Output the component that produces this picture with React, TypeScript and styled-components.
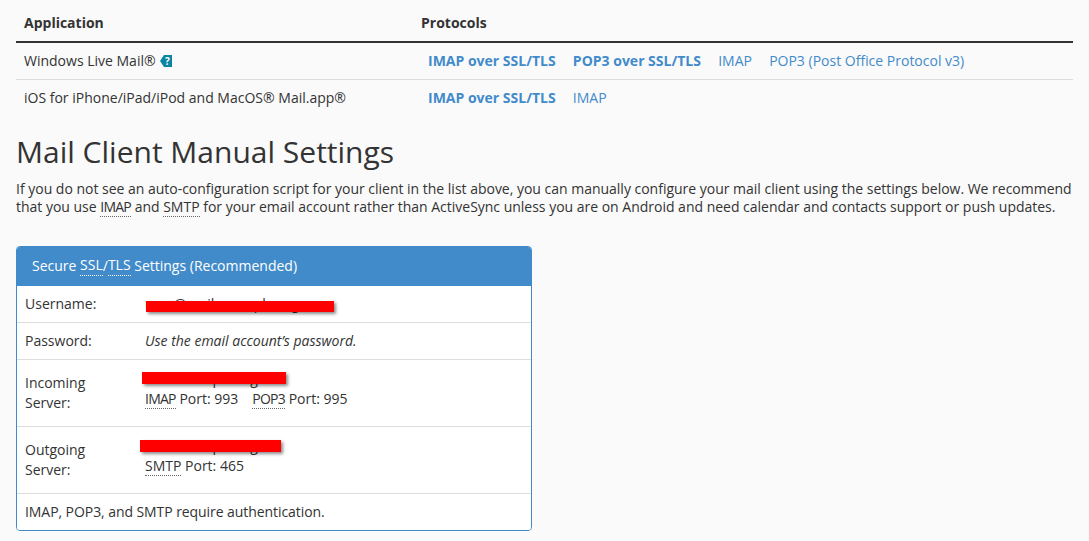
import React from "react";
import styled, { createGlobalStyle } from "styled-components";

const Global = createGlobalStyle`
  html, body { margin: 0; padding: 0; background: #fafafa; }
  body { font-family: "Open Sans", "Liberation Sans", sans-serif; font-size: 14px; line-height: 20px; color: #333; }
`;
const Page = styled.div`
  padding: 0 16px;
  height: 541px;
  overflow: hidden;
  box-sizing: border-box;
`;
const Table = styled.div`
  display: grid;
  grid-template-columns: 397px 1fr;
`;
const HeadCell = styled.div`
  font-weight: 700;
  padding: 13px 8px 8px;
  box-sizing: border-box;
  border-bottom: 2px solid #333;
  height: 43px;
`;
const Cell = styled.div<{ $last?: boolean }>`
  padding: 8px;
  height: 37px;
  box-sizing: border-box;
  display: flex;
  align-items: center;
  border-bottom: 1px solid ${(p) => (p.$last ? "transparent" : "#ddd")};
`;
const Links = styled(Cell)`
  padding-left: 15px;
  gap: 17.2px;
`;
const ProtoLink = styled.a<{ $strong?: boolean }>`
  color: #428bca;
  font-weight: ${(p) => (p.$strong ? 700 : 400)};
  text-decoration: none;
`;
const Help = styled.svg`
  margin-left: 4px;
  flex: none;
`;
const Title = styled.h2`
  font-size: 30px;
  font-weight: 400;
  line-height: 33px;
  margin: 18px 0 12px;
`;
const Intro = styled.p`
  margin: 0 -8px 30px 0;
  line-height: 18px;
  letter-spacing: -0.012px;
`;
const Abbr = styled.span<{ $tight?: boolean }>`
  border-bottom: 1px dotted #666;
  letter-spacing: ${(p) => (p.$tight ? "-0.75px" : "0")};
`;
const Panel = styled.div`
  width: 516px;
  box-sizing: border-box;
  border: 1px solid #428bca;
  border-radius: 4px;
  overflow: hidden;
`;
const PanelHead = styled.div`
  background: #428bca;
  color: #fff;
  height: 39px;
  padding: 0 15px 2px;
  box-sizing: border-box;
  display: flex;
  align-items: center;
  white-space: pre;
`;
const WhiteAbbr = styled(Abbr)`
  border-bottom-color: #fff;
`;
const Row = styled.div<{ $h: number }>`
  position: relative;
  display: grid;
  grid-template-columns: 120px 1fr;
  align-items: center;
  height: ${(p) => p.$h}px;
  padding: 0 8px;
  box-sizing: border-box;
  background: #fff;
  border-bottom: 1px solid #ddd;
`;
const Foot = styled.div`
  background: #fff;
  height: 36px;
  padding: 8px;
  box-sizing: border-box;
  letter-spacing: -0.07px;
`;
const Label = styled.div``;
const Value = styled.div<{ $italic?: boolean }>`
  font-style: ${(p) => (p.$italic ? "italic" : "normal")};
`;
const ServerValue = styled.div`
  padding-bottom: 9px;
`;
const Ports = styled.div`
  display: flex;
  gap: 14px;
  white-space: pre;
`;
const Redact = styled.div<{ $l: number; $t: number; $w: number; $h: number }>`
  position: absolute;
  left: ${(p) => p.$l}px;
  top: ${(p) => p.$t}px;
  width: ${(p) => p.$w}px;
  height: ${(p) => p.$h}px;
  background: #ff0000;
  box-shadow: 2px 2px 3px rgba(0, 0, 0, 0.45);
`;

export default function App() {
  return (
    <Page>
      <Global />
      <Table>
        <HeadCell>Application</HeadCell>
        <HeadCell>Protocols</HeadCell>
        <Cell>
          Windows Live Mail®
          <Help width="12" height="12" viewBox="0 0 12 12">
            <path d="M4 0H12V12H4L0 6Z" fill="#0a85a0" />
            <text x="7.5" y="10" fontSize="10" fontWeight="700" fill="#fff" textAnchor="middle" fontFamily="Open Sans">?</text>
          </Help>
        </Cell>
        <Links>
          <ProtoLink $strong>IMAP over SSL/TLS</ProtoLink>
          <ProtoLink $strong>POP3 over SSL/TLS</ProtoLink>
          <ProtoLink>IMAP</ProtoLink>
          <ProtoLink>POP3 (Post Office Protocol v3)</ProtoLink>
        </Links>
        <Cell $last>iOS for iPhone/iPad/iPod and MacOS® Mail.app®</Cell>
        <Links $last>
          <ProtoLink $strong>IMAP over SSL/TLS</ProtoLink>
          <ProtoLink>IMAP</ProtoLink>
        </Links>
      </Table>
      <Title>Mail Client Manual Settings</Title>
      <Intro>
        If you do not see an auto-configuration script for your client in the list above, you can manually configure your mail client using the settings below. We recommend that you use <Abbr $tight>IMAP</Abbr> and <Abbr>SMTP</Abbr> for your email account rather than ActiveSync unless you are on Android and need calendar and contacts support or push updates.
      </Intro>
      <Panel>
        <PanelHead>
          Secure <WhiteAbbr>SSL</WhiteAbbr>/<WhiteAbbr>TLS</WhiteAbbr> Settings (Recommended)
        </PanelHead>
        <Row $h={37}>
          <Label>Username:</Label>
          <Value>user@mail.example.org</Value>
          <Redact $l={129} $t={15} $w={188} $h={11} />
        </Row>
        <Row $h={37}>
          <Label>Password:</Label>
          <Value $italic>Use the email account’s password.</Value>
        </Row>
        <Row $h={67}>
          <Label>Incoming<br />Server:</Label>
          <ServerValue>
            mail.example.org
            <Ports>
              <span><Abbr $tight>IMAP</Abbr> Port: 993</span>
              <span><Abbr $tight>POP3</Abbr> Port: 995</span>
            </Ports>
          </ServerValue>
          <Redact $l={125} $t={12} $w={144} $h={12} />
        </Row>
        <Row $h={67}>
          <Label>Outgoing<br />Server:</Label>
          <ServerValue>
            mail.example.org
            <Ports><span><Abbr>SMTP</Abbr> Port: 465</span></Ports>
          </ServerValue>
          <Redact $l={123} $t={13} $w={141} $h={12} />
        </Row>
        <Foot>IMAP, POP3, and SMTP require authentication.</Foot>
      </Panel>
    </Page>
  );
}
